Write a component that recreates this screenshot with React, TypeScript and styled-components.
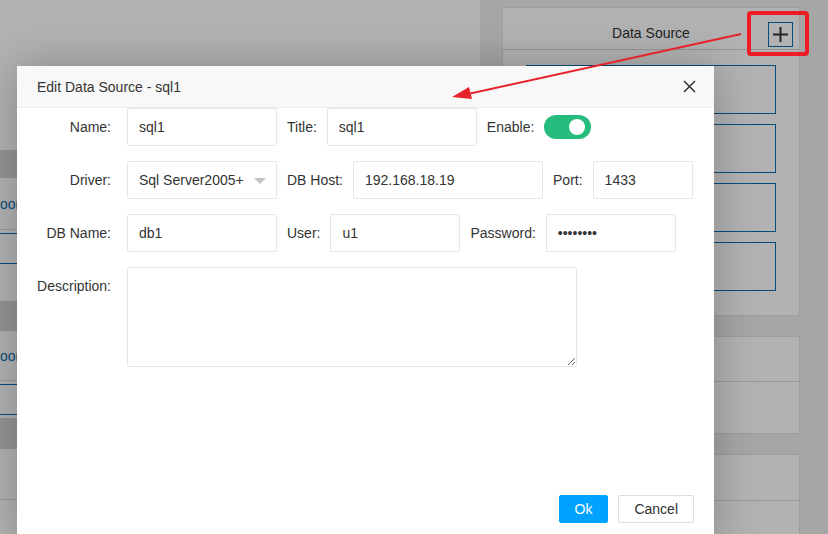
import React from 'react';
import styled, { createGlobalStyle } from 'styled-components';

const GlobalStyle = createGlobalStyle`
  html, body {
    margin: 0;
    padding: 0;
    overflow: hidden;
  }
  body {
    font-family: "Liberation Sans", Arial, sans-serif;
    font-size: 14px;
    color: #333;
  }
  * {
    box-sizing: border-box;
  }
`;

const Page = styled.div`
  position: relative;
  width: 828px;
  height: 534px;
  display: flex;
  background: #fff;
  overflow: hidden;
`;

const Main = styled.div`
  flex: 1;
  display: flex;
  flex-direction: column;
  background: #fff;
`;

const TopArea = styled.div`
  height: 150px;
  flex-shrink: 0;
`;

const SectionHead = styled.div<{ $height: number }>`
  height: ${(p) => p.$height}px;
  background: #d6d6d6;
  flex-shrink: 0;
`;

const ItemRow = styled.div<{ $height: number }>`
  height: ${(p) => p.$height}px;
  display: flex;
  align-items: center;
  border-bottom: 1px solid #ddd;
  color: #0a6fb5;
  white-space: nowrap;
  flex-shrink: 0;
`;

const LinkBox = styled.div`
  height: 31px;
  margin-top: 3px;
  border-top: 1px solid #0a6fb5;
  border-bottom: 1px solid #0a6fb5;
  flex-shrink: 0;
`;

const Spacer = styled.div<{ $height: number }>`
  height: ${(p) => p.$height}px;
  flex-shrink: 0;
`;

const Sidebar = styled.div`
  width: 348px;
  flex-shrink: 0;
  background: #eeeeee;
  padding: 7px 28px 0 22px;
  display: flex;
  flex-direction: column;
  gap: 20px;
`;

const Panel = styled.div`
  background: #fff;
  border: 1px solid #e2e2e2;
  display: flex;
  flex-direction: column;
`;

const PanelHead = styled.div`
  position: relative;
  height: 42px;
  padding-top: 8px;
  display: flex;
  align-items: center;
  justify-content: center;
  border-bottom: 1px solid #d4d4d4;
  font-size: 14px;
  color: #333;
`;

const AddButton = styled.div`
  position: absolute;
  right: 6px;
  top: 14px;
  width: 25px;
  height: 25px;
  border: 1px solid #0a6fb5;
  display: flex;
  align-items: center;
  justify-content: center;
`;

const PanelBody = styled.div`
  display: flex;
  flex-direction: column;
  gap: 10px;
  padding: 15px 23px 24px 23px;
`;

const SourceBox = styled.div`
  height: 49px;
  border: 1px solid #0a6fb5;
`;

const PanelRow = styled.div<{ $height: number; $line?: boolean }>`
  height: ${(p) => p.$height}px;
  border-bottom: ${(p) => (p.$line ? '1px solid #d8d8d8' : 'none')};
`;

const Backdrop = styled.div`
  position: absolute;
  inset: 0;
  background: rgba(0, 0, 0, 0.3);
`;

const Modal = styled.div`
  position: absolute;
  left: 17px;
  top: 66px;
  width: 697px;
  height: 480px;
  background: #fff;
  display: flex;
  flex-direction: column;
  box-shadow: 0 0 40px rgba(0, 0, 0, 0.25);
`;

const ModalHeader = styled.div`
  height: 42px;
  flex-shrink: 0;
  display: flex;
  align-items: center;
  justify-content: space-between;
  padding: 0 18px 0 20px;
  background: #f8f8f8;
  border-bottom: 1px solid #eee;
`;

const ModalTitle = styled.div`
  font-size: 14px;
  color: #333;
`;

const CloseButton = styled.div`
  width: 14px;
  height: 14px;
  display: flex;
  align-items: center;
  justify-content: center;
`;

const ModalBody = styled.div`
  flex: 1;
  display: flex;
  flex-direction: column;
  gap: 15px;
`;

const FormRow = styled.div<{ $top?: boolean }>`
  display: flex;
  align-items: ${(p) => (p.$top ? 'flex-start' : 'center')};
  gap: 10px;
`;

const LeadLabel = styled.label<{ $pad?: number }>`
  width: 100px;
  padding-right: 6px;
  padding-top: ${(p) => p.$pad ?? 0}px;
  text-align: right;
  color: #333;
  font-size: 14px;
  flex-shrink: 0;
`;

const FieldLabel = styled.label`
  color: #333;
  font-size: 14px;
  white-space: nowrap;
  flex-shrink: 0;
`;

const TextInput = styled.input<{ $width: number }>`
  width: ${(p) => p.$width}px;
  height: 38px;
  border: 1px solid #e6e6e6;
  border-radius: 2px;
  padding: 0 11px;
  font-family: "Liberation Sans", Arial, sans-serif;
  font-size: 14px;
  color: #333;
  background: #fff;
  outline: none;
  flex-shrink: 0;
`;

const SelectBox = styled.div<{ $width: number }>`
  position: relative;
  width: ${(p) => p.$width}px;
  height: 38px;
  border: 1px solid #e6e6e6;
  border-radius: 2px;
  padding: 0 11px;
  display: flex;
  align-items: center;
  font-size: 14px;
  color: #333;
  flex-shrink: 0;
`;

const Caret = styled.span`
  position: absolute;
  right: 10px;
  top: 16px;
  width: 0;
  height: 0;
  border-left: 6px solid transparent;
  border-right: 6px solid transparent;
  border-top: 6px solid #c2c2c2;
`;

const TextArea = styled.textarea`
  width: 450px;
  height: 100px;
  border: 1px solid #e6e6e6;
  border-radius: 2px;
  padding: 8px 11px;
  font-family: "Liberation Sans", Arial, sans-serif;
  font-size: 14px;
  outline: none;
  resize: both;
`;

const Toggle = styled.div<{ $on: boolean }>`
  position: relative;
  width: 47px;
  height: 24px;
  border-radius: 12px;
  background: ${(p) => (p.$on ? '#25bc7e' : '#d2d2d2')};
  flex-shrink: 0;

  &::after {
    content: '';
    position: absolute;
    top: 4px;
    ${(p) => (p.$on ? 'right: 6px;' : 'left: 6px;')}
    width: 16px;
    height: 16px;
    border-radius: 50%;
    background: #fff;
  }
`;

const ModalFooter = styled.div`
  display: flex;
  justify-content: flex-end;
  gap: 10px;
  padding: 0 20px 23px 0;
`;

const Button = styled.button<{ $primary?: boolean }>`
  height: 28px;
  padding: 0 15px;
  border-radius: 2px;
  border: 1px solid ${(p) => (p.$primary ? '#00a2ff' : '#dedede')};
  background: ${(p) => (p.$primary ? '#00a2ff' : '#fff')};
  color: ${(p) => (p.$primary ? '#fff' : '#333')};
  font-family: "Liberation Sans", Arial, sans-serif;
  font-size: 14px;
  cursor: pointer;
`;

const Annotation = styled.svg`
  position: absolute;
  left: 0;
  top: 0;
  pointer-events: none;
`;

const App: React.FC = () => {
  return (
    <>
      <GlobalStyle />
      <Page>
        <Main>
          <TopArea />
          <SectionHead $height={28} />
          <ItemRow $height={52}>oon</ItemRow>
          <LinkBox />
          <Spacer $height={37} />
          <SectionHead $height={30} />
          <ItemRow $height={50}>oon</ItemRow>
          <LinkBox />
          <Spacer $height={3} />
          <SectionHead $height={31} />
          <ItemRow $height={51} />
        </Main>
        <Sidebar>
          <Panel>
            <PanelHead>
              Data Source
              <AddButton>
                <svg width="17" height="17" viewBox="0 0 17 17">
                  <path d="M8.5 1v15M1 8.5h15" stroke="#333" strokeWidth="2" />
                </svg>
              </AddButton>
            </PanelHead>
            <PanelBody>
              <SourceBox />
              <SourceBox />
              <SourceBox />
              <SourceBox />
            </PanelBody>
          </Panel>
          <Panel>
            <PanelRow $height={45} $line />
            <PanelRow $height={51} />
          </Panel>
          <Panel>
            <PanelRow $height={46} $line />
            <PanelRow $height={40} />
          </Panel>
        </Sidebar>
        <Backdrop />
        <Modal>
          <ModalHeader>
            <ModalTitle>Edit Data Source - sql1</ModalTitle>
            <CloseButton>
              <svg width="13" height="13" viewBox="0 0 13 13">
                <path d="M1 1l11 11M12 1L1 12" stroke="#333" strokeWidth="1.5" />
              </svg>
            </CloseButton>
          </ModalHeader>
          <ModalBody>
            <FormRow>
              <LeadLabel>Name:</LeadLabel>
              <TextInput $width={150} defaultValue="sql1" />
              <FieldLabel>Title:</FieldLabel>
              <TextInput $width={150} defaultValue="sql1" />
              <FieldLabel>Enable:</FieldLabel>
              <Toggle $on />
            </FormRow>
            <FormRow>
              <LeadLabel>Driver:</LeadLabel>
              <SelectBox $width={150}>
                Sql Server2005+
                <Caret />
              </SelectBox>
              <FieldLabel>DB Host:</FieldLabel>
              <TextInput $width={190} defaultValue="192.168.18.19" />
              <FieldLabel>Port:</FieldLabel>
              <TextInput $width={100} defaultValue="1433" />
            </FormRow>
            <FormRow>
              <LeadLabel>DB Name:</LeadLabel>
              <TextInput $width={150} defaultValue="db1" />
              <FieldLabel>User:</FieldLabel>
              <TextInput $width={130} defaultValue="u1" />
              <FieldLabel>Password:</FieldLabel>
              <TextInput $width={130} type="password" defaultValue="password" />
            </FormRow>
            <FormRow $top>
              <LeadLabel $pad={11}>Description:</LeadLabel>
              <TextArea />
            </FormRow>
          </ModalBody>
          <ModalFooter>
            <Button $primary>Ok</Button>
            <Button>Cancel</Button>
          </ModalFooter>
        </Modal>
        <Annotation width="828" height="534" viewBox="0 0 828 534">
          <rect x="749" y="13" width="58" height="41" rx="2" fill="none" stroke="#ee1c25" strokeWidth="4" />
          <line x1="741" y1="34" x2="468" y2="94" stroke="#e8222a" strokeWidth="2" />
          <polygon points="452,97 469,87 472,99" fill="#e8222a" />
        </Annotation>
      </Page>
    </>
  );
};

export default App;
